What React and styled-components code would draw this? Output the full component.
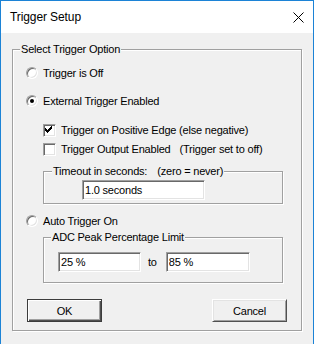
import React from 'react';
import styled, { createGlobalStyle } from 'styled-components';

const GlobalStyle = createGlobalStyle`
  html, body {
    margin: 0;
    padding: 0;
    background: #f0f0f0;
  }
  body {
    font-family: "Liberation Sans", Arial, sans-serif;
    font-size: 11px;
    letter-spacing: -0.2px;
    color: #000;
  }
`;

const Window = styled.div`
  box-sizing: border-box;
  width: 314px;
  height: 344px;
  border: 1px solid #1c83d6;
  border-bottom: none;
  background: #f0f0f0;
  display: flex;
  flex-direction: column;
  overflow: hidden;
`;

const TitleBar = styled.div`
  flex: none;
  height: 32px;
  background: #fff;
  display: flex;
  align-items: center;
  justify-content: space-between;
  padding: 0 9px;
`;

const Title = styled.span`
  font-size: 12px;
  line-height: 16px;
  letter-spacing: -0.1px;
`;

const CloseIcon = styled.svg`
  display: block;
  margin-top: 1px;
`;

const Body = styled.div`
  padding: 16px 11px 0;
`;

const Group = styled.div`
  box-sizing: border-box;
  display: flex;
  flex-direction: column;
  width: ${(p) => p.$width}px;
  height: ${(p) => p.$height}px;
  margin: ${(p) => p.$top || 0}px 0 0 ${(p) => p.$left || 0}px;
  border: 1px solid #a0a0a0;
  box-shadow: inset 1px 1px 0 #fff, 1px 1px 0 #fff;
`;

const Legend = styled.div`
  align-self: flex-start;
  height: 13px;
  line-height: 13px;
  margin: -7px 0 0 ${(p) => p.$indent}px;
  padding: 0 1px;
  background: #f0f0f0;
  white-space: nowrap;
`;

const Gap = styled.span`
  margin-left: ${(p) => p.$size}px;
`;

const OptionRow = styled.div`
  display: flex;
  align-items: center;
  height: 16px;
  gap: ${(p) => p.$gap || 5}px;
  margin: ${(p) => p.$top}px 0 0 ${(p) => p.$left}px;
  white-space: nowrap;
`;

const RadioCircle = styled.span`
  box-sizing: border-box;
  flex: none;
  width: 12px;
  height: 12px;
  border-radius: 50%;
  background: #fff;
  border: 1px solid;
  border-color: #a0a0a0 #fff #fff #a0a0a0;
  box-shadow: inset 1px 1px 0 #696969, inset -1px -1px 0 #e3e3e3;
  display: flex;
  align-items: center;
  justify-content: center;

  &::after {
    content: '';
    width: 4px;
    height: 4px;
    border-radius: 50%;
    background: ${(p) => (p.$checked ? '#000' : 'transparent')};
  }
`;

const CheckBox = styled.span`
  box-sizing: border-box;
  flex: none;
  width: 13px;
  height: 13px;
  background: #fff;
  border: 1px solid;
  border-color: #a0a0a0 #fff #fff #a0a0a0;
  box-shadow: inset 1px 1px 0 #696969, inset -1px -1px 0 #e3e3e3;

  svg {
    display: block;
  }
`;

const TextField = styled.input`
  box-sizing: border-box;
  width: ${(p) => p.$width}px;
  height: 20px;
  margin: ${(p) => p.$top || 0}px 0 0 ${(p) => p.$left || 0}px;
  padding: 0 2px;
  background: #fff;
  border: 1px solid;
  border-color: #a0a0a0 #fff #fff #a0a0a0;
  box-shadow: inset 1px 1px 0 #696969, inset -1px -1px 0 #e3e3e3;
  font-family: "Liberation Sans", Arial, sans-serif;
  font-size: 11px;
  letter-spacing: -0.2px;
  color: #000;
  outline: none;
`;

const FieldRow = styled.div`
  display: flex;
  align-items: center;
  margin-top: 8px;
`;

const FieldLabel = styled.span`
  margin: 0 9px 0 7px;
`;

const ButtonRow = styled.div`
  display: flex;
  justify-content: space-between;
  margin-top: 16px;
  padding: 0 14px;
`;

const Button = styled.button`
  box-sizing: border-box;
  width: 75px;
  height: 23px;
  padding: 0;
  background: #f0f0f0;
  font-family: "Liberation Sans", Arial, sans-serif;
  font-size: 11px;
  letter-spacing: -0.2px;
  color: #000;
  border: 1px solid;
  border-color: ${(p) => (p.$default ? '#3c3c3c' : '#fff #505050 #505050 #fff')};
  box-shadow: ${(p) =>
    p.$default
      ? 'inset 1px 1px 0 #fff, inset -1px -1px 0 #505050, inset -2px -2px 0 #a0a0a0'
      : 'inset 1px 1px 0 #e3e3e3, inset -1px -1px 0 #a0a0a0'};
`;

const checkColumns = [2, 3, 4, 3, 2, 1, 0];

const Check = () => (
  <svg width="11" height="11" viewBox="0 0 11 11">
    {checkColumns.map((start, i) => (
      <rect key={i} x={1 + i} y={1 + start} width="1" height="3" fill="#000" />
    ))}
  </svg>
);

const Radio = ({ checked, label, top }) => (
  <OptionRow $top={top} $left={13}>
    <RadioCircle $checked={checked} />
    <span>{label}</span>
  </OptionRow>
);

const Option = ({ checked, children, top }) => (
  <OptionRow $top={top} $left={30} $gap={5}>
    <CheckBox>{checked && <Check />}</CheckBox>
    <span>{children}</span>
  </OptionRow>
);

export default function App() {
  return (
    <>
      <GlobalStyle />
      <Window>
        <TitleBar>
          <Title>Trigger Setup</Title>
          <CloseIcon width="11" height="11" viewBox="0 0 11 11">
            <path d="M0.5 0.5 L10.5 10.5 M10.5 0.5 L0.5 10.5" stroke="#000" strokeWidth="1" />
          </CloseIcon>
        </TitleBar>
        <Body>
          <Group $width={290} $height={282}>
            <Legend $indent={7}>Select Trigger Option</Legend>
            <Radio top={9} label="Trigger is Off" />
            <Radio top={12} checked label="External Trigger Enabled" />
            <Option top={13} checked>
              Trigger on Positive Edge (else negative)
            </Option>
            <Option top={3}>
              Trigger Output Enabled<Gap $size={9}>(Trigger set to off)</Gap>
            </Option>
            <Group $width={240} $height={33} $top={14} $left={30}>
              <Legend $indent={8}>
                Timeout in seconds:<Gap $size={10}>(zero = never)</Gap>
              </Legend>
              <TextField $width={123} $top={2} $left={38} defaultValue="1.0 seconds" />
            </Group>
            <Radio top={9} label="Auto Trigger On" />
            <Group $width={240} $height={46} $top={8} $left={30}>
              <Legend $indent={7}>ADC Peak Percentage Limit</Legend>
              <FieldRow>
                <TextField $width={83} $left={14} defaultValue="25 %" />
                <FieldLabel>to</FieldLabel>
                <TextField $width={84} defaultValue="85 %" />
              </FieldRow>
            </Group>
            <ButtonRow>
              <Button $default>OK</Button>
              <Button>Cancel</Button>
            </ButtonRow>
          </Group>
        </Body>
      </Window>
    </>
  );
}
